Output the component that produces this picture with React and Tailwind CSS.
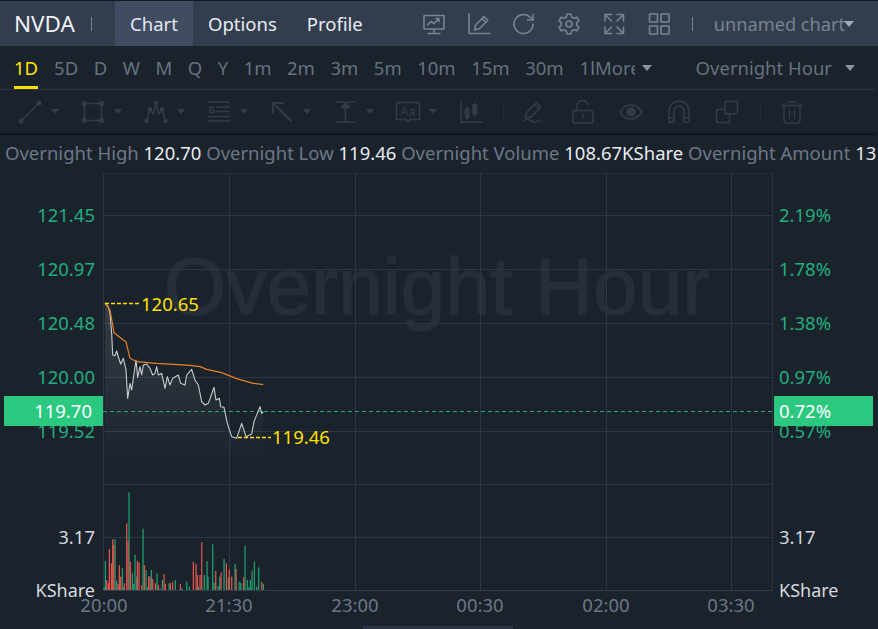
import React from "react";

const font = { fontFamily: '"Noto Sans", "Open Sans", sans-serif' };

const Caret = ({ cls = "border-t-[#353c49]" }) => (
  <span className={`inline-block w-0 h-0 border-l-[4px] border-r-[4px] border-t-[5px] border-l-transparent border-r-transparent ${cls}`} />
);
const BigCaret = ({ cls = "border-t-[#8a94a0]" }) => (
  <span className={`inline-block w-0 h-0 border-l-[5px] border-r-[5px] border-t-[6px] border-l-transparent border-r-transparent ${cls}`} />
);

const HI = ({ children, w = 24, h = 24, vb = "0 0 24 24", sw = 1.6 }) => (
  <svg width={w} height={h} viewBox={vb} fill="none" stroke="#78838f" strokeWidth={sw} strokeLinecap="round" strokeLinejoin="round">{children}</svg>
);
const TI = ({ children, sw = 1.5 }) => (
  <svg width="24" height="24" viewBox="0 0 24 24" fill="none" stroke="#353c49" strokeWidth={sw} strokeLinecap="round" strokeLinejoin="round" className="shrink-0">{children}</svg>
);

const T = (g) => (
  <div className="w-[63px] flex items-center shrink-0">
    {g}
    <span className="ml-[9px] flex"><Caret /></span>
  </div>
);

const whitePts = "45,40 55,50 60,70 65,130 68,195 75,197 80,183 88,210 92,222 100,205 108,240 113,325 120,280 125,300 138,210 143,262 150,230 155,255 160,225 170,222 180,235 188,255 195,250 200,230 205,255 215,250 225,295 232,260 240,285 248,265 265,255 272,280 285,285 290,255 305,238 315,270 325,285 335,335 345,345 355,340 372,292 378,330 388,325 392,350 402,352 412,400 425,440 440,445 455,400 468,440 485,432 492,395 510,350 515,370 520,365";
const orangePts = "45,38 60,60 72,128 100,150 108,155 120,205 140,215 200,220 300,226 330,230 350,238 395,248 440,266 490,280 520,284";

const greenBars = [[46,243],[117,37],[159,146],[75,178],[135,225],[97,265],[127,280],[168,270],[184,270],[201,280],[217,300],[256,300],[290,305],[351,243],[368,193],[343,285],[354,290],[402,237],[389,290],[435,252],[465,197],[493,245],[486,272],[506,262],[447,305],[472,300],[481,300],[520,312],[237,310],[298,320],[131,312],[80,302],[140,290],[210,325],[372,308],[460,310],[415,292],[42,322],[100,322],[172,322],[276,325],[325,320],[384,318],[452,308],[476,322],[500,320]];
const redBars = [[50,300],[58,207],[64,250],[68,178],[71,195],[88,255],[92,290],[103,310],[110,130],[114,185],[121,245],[142,243],[147,248],[163,255],[176,288],[180,290],[188,297],[196,310],[205,315],[222,282],[226,312],[241,308],[248,305],[271,312],[310,246],[318,252],[322,285],[335,187],[330,285],[377,273],[393,277],[409,250],[418,268],[425,290],[438,267],[461,292],[515,306],[55,310],[84,312],[155,315]];

const hLines = [215, 269, 323, 377, 431, 484, 537];
const vLines = [229, 355, 480, 606, 731];

const Lab = ({ y, x, r, c, children, size = "text-[18.5px]" }) => (
  <span
    className={`absolute leading-none whitespace-nowrap -translate-y-1/2 ${size} ${c}`}
    style={{ top: y - 173, ...(x !== undefined ? { left: x } : { right: r }) }}
  >{children}</span>
);

export default function App() {
  const periods = ["5D", "D", "W", "M", "Q", "Y", "1m", "2m", "3m", "5m", "10m", "15m", "30m"];
  return (
    <div className="w-[878px] h-[629px] bg-[#1a222c] flex flex-col overflow-hidden relative" style={font}>
      {/* header */}
      <div className="h-[46px] shrink-0 bg-[#323d4e] border-t border-[#14181f] flex items-center text-[18.5px]">
        <span className="ml-[14px] text-[22.500px] text-[#eef1f5] w-[64px]">NVDA</span>
        <span className="w-px h-[14px] bg-[#77828f] ml-[13px]" />
        <span className="ml-[23px] w-[78px] h-full bg-[#3f4c61] flex items-center justify-center text-[#e4e8ee]">Chart</span>
        <span className="ml-[15px] text-[#e9ecf1]">Options</span>
        <span className="ml-[30px] text-[#e9ecf1]">Profile</span>
        <div className="ml-[59px] flex items-center gap-[21px]">
          <HI>
            <rect x="2" y="3.500" width="20" height="13.500" rx="0.500" />
            <path d="M5.500 13l3.500-3.500 3 2 4.500-4.500M14 6.500h3v3" />
            <path d="M12 17v4M6 21.500h12" />
          </HI>
          <HI>
            <path d="M2 1.500V21.500H23" />
            <path d="M7.500 18l1.200-5L17 4.500l3.800 3.800-8.400 8.400z" />
            <path d="M15 6.500l3.800 3.800" />
          </HI>
          <HI>
            <path d="M21 12a9.500 9.500 0 1 1-2.600-6.500L21 8" />
            <path d="M21 2.500V8h-5.500" />
          </HI>
          <HI>
            <path d="M10 2h4l.7 3 2.300 1.200 2.900-1 2 3.500-2.200 2.100v2.400l2.200 2.100-2 3.500-2.900-1-2.300 1.200-.7 3h-4l-.7-3L7 17.800l-2.900 1-2-3.500 2.200-2.100v-2.400L2.100 8.700l2-3.500 2.900 1L9.300 5z" />
            <circle cx="12" cy="12" r="3" />
          </HI>
          <HI>
            <path d="M3 9V2.500H9.500M3 2.500L9.500 9M15 2.500h6.500V9M21.500 2.500L15 9M3 15v6.500h6.500M3 21.500L9.500 15M15 21.500h6.500V15M21.500 21.500L15 15" />
          </HI>
          <HI>
            <rect x="2.500" y="2" width="8" height="8" rx="0.500" />
            <rect x="14" y="2" width="8" height="8" rx="0.500" />
            <rect x="2.500" y="14" width="8" height="8" rx="0.500" />
            <rect x="14" y="14" width="8" height="8" rx="0.500" />
          </HI>
        </div>
        <span className="w-px h-[14px] bg-[#77828f] ml-[21px]" />
        <span className="ml-[21px] text-[18.2px] text-[#78838f] whitespace-nowrap pt-[2px]">unnamed chart</span>
        <span className="flex -ml-[1px]"><BigCaret cls="border-t-[#a3abb6]" /></span>
      </div>

      {/* periods */}
      <div className="h-[44px] shrink-0 w-[875px] border-b border-[#2c3542] flex items-stretch pt-[1px] text-[18.5px] text-[#66727f]">
        <span className="ml-[14px] relative flex items-center text-[#ffe100]">
          1D
          <span className="absolute left-0 right-0 bottom-0 h-[3px] bg-[#ffe100]" />
        </span>
        <div className="ml-[16px] flex items-center gap-[15.500px]">
          {periods.map((p) => <span key={p}>{p}</span>)}
        </div>
        <div className="ml-[16px] flex items-center">
          <span className="w-[55px] overflow-hidden whitespace-nowrap">1lMore</span>
          <span className="ml-[7px] flex"><BigCaret /></span>
        </div>
        <div className="ml-[44px] flex items-center">
          <span className="whitespace-nowrap">Overnight Hour</span>
          <span className="ml-[13px] flex"><BigCaret /></span>
        </div>
      </div>

      {/* tools */}
      <div className="h-[45px] shrink-0 bg-[#1c222d] border-b-2 border-[#10151b] w-[875px] flex items-center pl-[18px]">
        {T(<TI><circle cx="3" cy="21" r="1.800" fill="#353c49" /><circle cx="21" cy="3" r="1.800" fill="#353c49" /><path d="M3 21L21 3" /></TI>)}
        {T(<TI><rect x="3.500" y="3.500" width="17" height="17" /><circle cx="3.500" cy="3.500" r="1.800" fill="#353c49" /><circle cx="20.500" cy="3.500" r="1.800" fill="#353c49" /><circle cx="3.500" cy="20.500" r="1.800" fill="#353c49" /><circle cx="20.500" cy="20.500" r="1.800" fill="#353c49" /></TI>)}
        {T(<TI><path d="M2.500 21L6 9l3.500 5L12 3l2.500 11L18 9l3.500 12" /><circle cx="2.500" cy="21" r="1.600" fill="#353c49" /><circle cx="21.500" cy="21" r="1.600" fill="#353c49" /><circle cx="6" cy="9" r="1.400" fill="#353c49" /><circle cx="18" cy="9" r="1.400" fill="#353c49" /><circle cx="12" cy="3" r="1.400" fill="#353c49" /></TI>)}
        {T(<TI><path d="M1.500 2H22.500M10 7H22.500M10 11.500H22.500M1.500 16.500H22.500M1.500 21H22.500" /><path d="M7 7H3V12.500H7V10H5" /></TI>)}
        {T(<TI sw={1.800}><path d="M3 3H13M3 3V13M3 3L21 21" /></TI>)}
        {T(<TI><path d="M3 2H22M3 22H22M12.500 6V22" /><path d="M8.500 7.500L12.500 3l4 4.500z" fill="#353c49" /></TI>)}
        {T(
          <svg width="26" height="24" viewBox="0 0 26 24" fill="none" stroke="#353c49" strokeWidth="1.500" strokeLinejoin="round" className="shrink-0 -mx-px">
            <path d="M1.500 2.500H24.500V19.500H15l-2 2.500-2-2.500H1.500z" />
            <text x="13" y="15.500" textAnchor="middle" fontSize="12.500" fill="#353c49" stroke="none" fontFamily="Noto Sans">Aa</text>
          </svg>
        )}
        <TI><path d="M2 1.500V22H23" /><rect x="6.500" y="9" width="3.500" height="8" /><path d="M8.250 7V19M15.750 3V16" /><rect x="14" y="5" width="3.500" height="9" fill="#353c49" /></TI>
        <span className="ml-[20px] w-px h-[22px] bg-[#232a35]" />
        <span className="ml-[17px] flex"><TI><path d="M4 17.500l1.500-5L15.500 2.500l4.500 4.500-10 10z" /><path d="M13.500 4.500l4.500 4.500" /><path d="M3 21c3-3 5-1.500 7.500 0s5 1.500 8.500-1" /></TI></span>
        <span className="ml-[26px] flex"><TI><rect x="2" y="10.500" width="20" height="12.500" rx="2.500" /><path d="M6 10.500V6.500a5.500 5.500 0 0 1 11-1M12 15v3" /></TI></span>
        <span className="ml-[24px] flex"><TI><path d="M1 12c3-5 7-7 11-7s8 2 11 7c-3 5-7 7-11 7s-8-2-11-7z" /><circle cx="12" cy="12" r="4" fill="#353c49" /></TI></span>
        <span className="ml-[24px] flex"><TI><path d="M2 22V11a10 10 0 0 1 20 0v11h-5V11a5 5 0 0 0-10 0v11z" /><path d="M2 18h5M17 18h5" /></TI></span>
        <span className="ml-[24px] flex"><TI><rect x="10" y="1.500" width="12.500" height="12.500" rx="1.500" /><path d="M10 9.500H3a1.500 1.500 0 0 0-1.500 1.500v10A1.500 1.500 0 0 0 3 22.500h10a1.500 1.500 0 0 0 1.500-1.500v-7" /></TI></span>
        <span className="ml-[21px] w-px h-[22px] bg-[#232a35]" />
        <span className="ml-[19px] flex"><TI><path d="M2 5.500H22M8 2H16" /><path d="M4 5.500V20a3 3 0 0 0 3 3H17a3 3 0 0 0 3-3V5.500" /><path d="M9.500 10v8M14.500 10v8" /></TI></span>
      </div>

      {/* info */}
      <div className="h-[38px] shrink-0 flex items-center pl-[5px] pb-[3px] gap-[4.800px] text-[18.5px] whitespace-nowrap overflow-hidden">
        <span className="text-[#6d7886]">Overnight High</span>
        <span className="text-[#e8ebef]">120.70</span>
        <span className="text-[#6d7886]">Overnight Low</span>
        <span className="text-[#e8ebef]">119.46</span>
        <span className="text-[#6d7886]">Overnight Volume</span>
        <span className="text-[#e8ebef]">108.67KShare</span>
        <span className="text-[#6d7886]">Overnight Amount</span>
        <span className="text-[#e8ebef]">13</span>
      </div>

      {/* chart */}
      <div className="flex-1 relative overflow-hidden">
        <span
          className="absolute left-[164px] top-[74px] text-[#262e39] text-[80px] leading-none tracking-[0.2px] whitespace-nowrap [-webkit-text-stroke:1.5px_#262e39]"
          style={{ fontFamily: '"Liberation Sans", sans-serif' }}
        >Overnight Hour</span>
        <svg className="absolute inset-0" width="878" height="456" viewBox="0 173 878 456" fill="none">
          <defs>
            <linearGradient id="area" x1="0" y1="0" x2="0" y2="1">
              <stop offset="0" stopColor="#ffffff" stopOpacity="0.12" />
              <stop offset="1" stopColor="#ffffff" stopOpacity="0" />
            </linearGradient>
          </defs>
          <path d="M103.500 173.500H772.500" stroke="#232c38" />
          {hLines.map((y) => <path key={y} d={`M103 ${y + 0.5}H772`} stroke="#2c3644" />)}
          <path d="M103 590.500H772" stroke="#333e4e" />
          <path d="M103.500 173V590M772.500 173V590" stroke="#2a3442" />
          {vLines.map((x) => <path key={x} d={`M${x + 0.5} 173V590`} stroke="#2c3644" />)}
          <g transform="translate(90 290) scale(0.33333)">
            <polygon points={`45,40 ${whitePts} 520,540 45,540`} fill="url(#area)" />
          </g>
          <path d="M103 411.500H772" stroke="#2fb98a" strokeDasharray="4 3" opacity="0.85" />
          <g transform="translate(90 290) scale(0.33333)">
            <polyline points={whitePts} stroke="#c9ccd1" strokeWidth="3.300" strokeLinejoin="round" />
            <polyline points={orangePts} stroke="#e8801f" strokeWidth="3.600" strokeLinejoin="round" />
          </g>
          <path d="M105 303.500H141" stroke="#ffdd00" strokeWidth="1.600" strokeDasharray="4 2" />
          <path d="M238 437.500H271" stroke="#ffdd00" strokeWidth="1.600" strokeDasharray="4 2" />
          <g transform="translate(90 480)">
            {greenBars.map(([x, t], i) => <rect key={i} x={x / 3 - 0.6} y={t / 3} width="1.300" height={(330 - t) / 3} fill="#1f9e6c" />)}
            {redBars.map(([x, t], i) => <rect key={i} x={x / 3 - 0.6} y={t / 3} width="1.300" height={(330 - t) / 3} fill="#d9554f" />)}
          </g>
        </svg>

        {[["121.45", 215], ["120.97", 269], ["120.48", 323], ["120.00", 377], ["119.52", 431]].map(([t, y]) => (
          <Lab key={t} y={y} r={783} c="text-[#22ae7c]">{t}</Lab>
        ))}
        {[["2.19%", 215], ["1.78%", 269], ["1.38%", 323], ["0.97%", 377], ["0.57%", 431]].map(([t, y]) => (
          <Lab key={t} y={y} x={779} c="text-[#22ae7c]">{t}</Lab>
        ))}
        <Lab y={537} r={783} c="text-[#d5d9de]">3.17</Lab>
        <Lab y={537} x={779} c="text-[#d5d9de]">3.17</Lab>
        <Lab y={590} r={783} size="text-[18px]" c="text-[#d5d9de]">KShare</Lab>
        <Lab y={590} x={779} size="text-[18px]" c="text-[#d5d9de]">KShare</Lab>
        <Lab y={304} x={141} c="text-[#ffe100]">120.65</Lab>
        <Lab y={437} x={272} c="text-[#ffe100]">119.46</Lab>

        {/* current price tags */}
        <div className="absolute left-[4px] top-[223px] w-[99px] h-[30px] bg-[#2ac97f] text-white text-[18.5px] flex items-center justify-end pr-[11px]">119.70</div>
        <div className="absolute left-[774px] top-[223px] w-[99px] h-[30px] bg-[#2ac97f] text-white text-[18.5px] flex items-center pl-[5px]">0.72%</div>

        {["20:00", "21:30", "23:00", "00:30", "02:00", "03:30"].map((t, i) => (
          <span
            key={t}
            className="absolute -translate-x-1/2 -translate-y-1/2 text-[18.5px] leading-none text-[#6d7785]"
            style={{ left: [104, 229, 355, 480, 606, 731][i], top: 605 - 173 }}
          >{t}</span>
        ))}
        <div className="absolute left-[363px] bottom-0 w-[150px] h-[3px] bg-[#2c3648]" />
      </div>
    </div>
  );
}
